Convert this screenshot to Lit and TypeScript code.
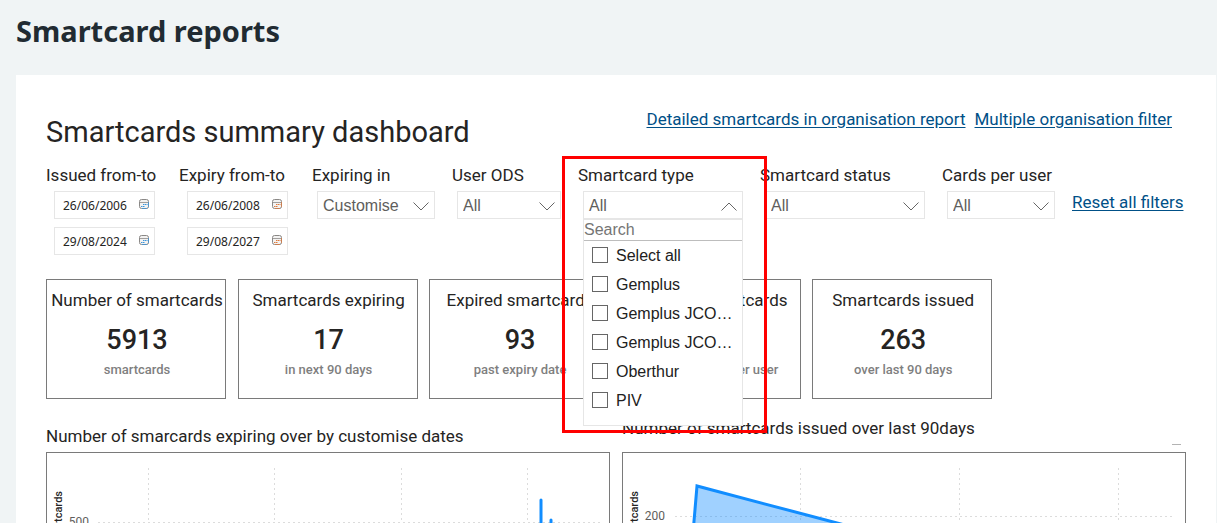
import { LitElement, html, svg, css } from "lit";
import { customElement, property } from "lit/decorators.js";

const chevron = (up = false) => html`<svg class="chevron" viewBox="0 0 16 9" aria-hidden="true">
  <path d=${up ? "M0.5 8.5 L8 1 L15.5 8.5" : "M0.5 0.5 L8 8 L15.5 0.5"} fill="none" stroke="#666" />
</svg>`;

@customElement("date-range")
class DateRange extends LitElement {
  @property() label = "";
  @property() from = "";
  @property() to = "";
  @property() accent = "#3a96dd";

  static styles = css`
    :host { display: block; }
    fieldset { border: 0; margin: 0; padding: 0; min-width: 0; }
    legend { padding: 0; margin-bottom: 6px; line-height: 20px; white-space: nowrap; }
    .date {
      display: flex; align-items: center; box-sizing: border-box; height: 28px;
      margin: 0 24px 8px 8px; padding: 0 5px 0 8px; border: 1px solid #e6e6e6;
    }
    .date:last-child { margin-bottom: 0; }
    input {
      flex: 1; min-width: 0; width: 0; border: 0; padding: 0; background: none; outline: none;
      font: 12px "Noto Sans", sans-serif; color: #252423;
    }
    svg { width: 10px; height: 10px; margin-bottom: 2px; flex: none; }
  `;

  private row(value: string, name: string) {
    return html`<label class="date">
      <input type="text" .value=${value} aria-label="${this.label} ${name}" />
      <svg viewBox="0 0 10 10" aria-hidden="true">
        <rect x="0.5" y="0.5" width="9" height="9" rx="2" fill="#f3f2f1" stroke="#8a8886" />
        <path d="M1 3.5H9" stroke="#a19f9d" />
        <path d="M4 5.5H8.5M2 7.5H6" stroke=${this.accent} stroke-dasharray="1.5 .5" />
        <path d="M9.5 3V8M3 9.5H8" stroke=${this.accent} stroke-opacity="0.7" />
      </svg>
    </label>`;
  }

  render() {
    return html`<fieldset>
      <legend>${this.label}</legend>
      ${this.row(this.from, "start")} ${this.row(this.to, "end")}
    </fieldset>`;
  }
}

@customElement("filter-select")
class FilterSelect extends LitElement {
  @property() label = "";
  @property() value = "All";

  static styles = css`
    :host { display: block; }
    label { display: block; line-height: 20px; margin-bottom: 6px; white-space: nowrap; }
    .control { display: grid; align-items: center; margin: 0 17px 0 5px; }
    select, .chevron { grid-area: 1 / 1; }
    select {
      appearance: none; box-sizing: border-box; width: 100%; height: 28px; margin: 0; padding: 0 5px;
      border: 1px solid #e6e6e6; border-radius: 0; background: #fff; color: #605e5c;
      font: 16px "Liberation Sans", Arial, sans-serif;
    }
    .chevron { justify-self: end; width: 16px; height: 9px; margin: 3px 6px 0 0; pointer-events: none; }
  `;

  render() {
    return html`<label for="s">${this.label}</label>
      <div class="control">
        <select id="s"><option>${this.value}</option></select>
        ${chevron()}
      </div>`;
  }
}

@customElement("type-filter")
class TypeFilter extends LitElement {
  private options = ["Select all", "Gemplus", "Gemplus JCO…", "Gemplus JCO…", "Oberthur", "PIV"];

  static styles = css`
    :host { display: block; position: relative; z-index: 2; }
    .label { line-height: 20px; margin-bottom: 6px; white-space: nowrap; }
    .control { position: relative; margin: 0 17px 0 5px; font: 16px "Liberation Sans", Arial, sans-serif; }
    button {
      display: flex; align-items: center; justify-content: space-between; box-sizing: border-box;
      width: 100%; height: 28px; padding: 1px 5px 0; border: 1px solid #e6e6e6; background: #fff;
      color: #605e5c; font: inherit;
    }
    .chevron { width: 16px; height: 9px; margin-top: 2px; }
    .popup {
      position: absolute; top: 27px; left: 0; right: 0; box-sizing: border-box; padding-bottom: 10px;
      border: 1px solid #e6e6e6; border-top-width: 2px; background: #fff;
    }
    .search {
      display: block; box-sizing: border-box; width: 100%; height: 21px; padding: 0; border: 0;
      border-bottom: 1px solid #bdbdbd; font: inherit; outline: none;
    }
    .search::placeholder { color: #757575; opacity: 1; }
    .option {
      display: flex; align-items: center; gap: 8px; height: 29px; padding-left: 8px;
      color: #212121; white-space: nowrap;
    }
    .option input {
      appearance: none; box-sizing: border-box; width: 16px; height: 16px; margin: 0 0 1px;
      border: 1px solid #666; background: #fff; flex: none;
    }
    .highlight {
      position: absolute; top: -9px; left: -16px; right: -7px; height: 277px; box-sizing: border-box;
      border: 3px solid #f00; pointer-events: none;
    }
  `;

  render() {
    return html`<div class="label" id="l">Smartcard type</div>
      <div class="control">
        <button aria-expanded="true" aria-labelledby="l">All ${chevron(true)}</button>
        <div class="popup">
          <input class="search" type="text" placeholder="Search" aria-label="Search smartcard types" />
          ${this.options.map((o) => html`<label class="option"><input type="checkbox" />${o}</label>`)}
        </div>
      </div>
      <div class="highlight"></div>`;
  }
}

@customElement("app-root")
class AppRoot extends LitElement {
  private cards = [
    ["Number of smartcards", "5913", "smartcards"],
    ["Smartcards expiring", "17", "in next 90 days"],
    ["Expired smartcards", "93", "past expiry date"],
    ["Multiple smartcards", "0", "multiple cards per user"],
    ["Smartcards issued", "263", "over last 90 days"],
  ];

  static styles = css`
    :host {
      display: block; height: 100vh; overflow: hidden; background: #f0f4f5; color: #252423;
      font: 17px/20px Roboto, sans-serif;
    }
    header { padding: 11px 16px 24px; }
    h1 { margin: 0; font: bold 29px/40px "Noto Sans", sans-serif; color: #212b32; }
    main { margin: 0 1px 0 16px; padding: 34px 30px 0; background: #fff; }
    a { color: #005087; text-underline-offset: 2px; white-space: nowrap; }
    .top { display: flex; justify-content: space-between; align-items: flex-start; padding-right: 14px; }
    h2 { margin: 6px 0 0; font-weight: 400; font-size: 29px; line-height: 34px; }
    nav { display: flex; gap: 9px; }
    .filters {
      display: grid; margin-top: 16px; align-items: start;
      grid-template-columns: 133fr 133fr 140fr 126fr 182fr 182fr 130fr 114fr;
    }
    .filters > * { min-width: 0; }
    .reset { margin-top: 27px; }
    .cards { display: grid; grid-template-columns: repeat(5, 180px); justify-content: space-between; width: 83%; margin-top: 24px; }
    .card {
      box-sizing: border-box; height: 120px; padding: 10px 0 0 2px; border: 1px solid #7a7a7a;
      text-align: center; white-space: nowrap;
    }
    .card h3 { margin: 0; font: inherit; }
    .number { margin-top: 13px; font-size: 27px; font-weight: 500; line-height: 34px; }
    .note { margin-top: 4px; font-size: 13px; font-weight: 500; line-height: 18px; color: #7f7f7f; }
    .charts { display: grid; grid-template-columns: 1fr 1fr; gap: 12px; align-items: end; margin-top: 19px; }
    figure { margin: 0; }
    figcaption { display: flex; justify-content: space-between; margin-bottom: 6px; }
    .issued figcaption { margin-bottom: 14px; }
    .more { align-self: end; width: 9px; height: 1px; margin: 0 5px -7px 0; background: #b3b3b3; }
    .plot { border: 1px solid #7a7a7a; height: 240px; overflow: hidden; }
    .plot svg { display: block; width: 100%; height: 240px; }
    .grid { stroke: #dcdcdc; stroke-width: 1; stroke-dasharray: 2 3; fill: none; }
    .tick { font: 12px Roboto, sans-serif; fill: #605e5c; }
    .axis { font: 500 11px Roboto, sans-serif; fill: #252423; }
  `;

  private plot(xs: number[], y: number, from: number, to: number, tick: string, body: unknown) {
    return html`<div class="plot">
      <svg viewBox="0 0 562 240" preserveAspectRatio="xMinYMin" role="img" aria-label="Smartcards over time">
        ${xs.map((x) => svg`<path class="grid" d="M${x + 0.5} 15V240" />`)}
        <path class="grid" d="M${from} ${y + 0.5}H${to}" />
        <text class="tick" text-anchor="end" x="42" y=${y + 4}>${tick}</text>
        <text class="axis" text-anchor="end" transform="translate(15 38) rotate(-90)">Number of smartcards</text>
        ${body}
      </svg>
    </div>`;
  }

  render() {
    return html`
      <header><h1>Smartcard reports</h1></header>
      <main>
        <div class="top">
          <h2>Smartcards summary dashboard</h2>
          <nav>
            <a href="#detail">Detailed smartcards in organisation report</a>
            <a href="#multiple">Multiple organisation filter</a>
          </nav>
        </div>
        <div class="filters">
          <date-range label="Issued from-to" from="26/06/2006" to="29/08/2024"></date-range>
          <date-range label="Expiry from-to" from="26/06/2008" to="29/08/2027" accent="#e07b3c"></date-range>
          <filter-select label="Expiring in" value="Customise"></filter-select>
          <filter-select label="User ODS"></filter-select>
          <type-filter></type-filter>
          <filter-select label="Smartcard status"></filter-select>
          <filter-select label="Cards per user"></filter-select>
          <a class="reset" href="#reset">Reset all filters</a>
        </div>
        <section class="cards">
          ${this.cards.map(
            ([title, number, note]) => html`<article class="card">
              <h3>${title}</h3>
              <div class="number">${number}</div>
              <div class="note">${note}</div>
            </article>`
          )}
        </section>
        <section class="charts">
          <figure>
            <figcaption>Number of smarcards expiring over by customise dates</figcaption>
            ${this.plot([101, 227, 354, 480], 69, 51, 553, "500",
              svg`<path d="M494 240V47M504 240V67" stroke="#118dff" stroke-width="3" stroke-linecap="round" />`)}
          </figure>
          <figure class="issued">
            <figcaption>Number of smartcards issued over last 90days<span class="more"></span></figcaption>
            ${this.plot([177, 336, 495], 63, 52, 549, "200",
              svg`<path d="M60 240L74 33L214 70L562 160V240Z" fill="#118dff" fill-opacity="0.4" />
                <path d="M60 240L70 80L74 33L214 70L562 160" fill="none" stroke="#118dff" stroke-width="3" />`)}
          </figure>
        </section>
      </main>
    `;
  }
}
